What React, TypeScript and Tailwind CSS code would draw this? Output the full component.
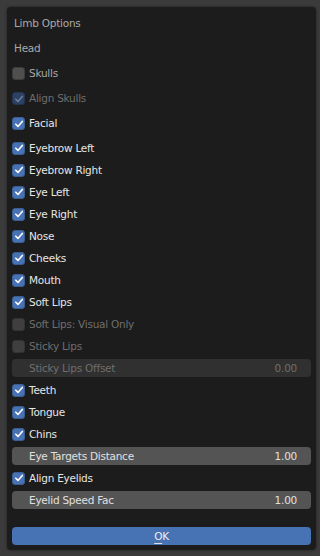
import React from "react";

type Row =
  | { kind: "label"; text: string; dim?: boolean }
  | { kind: "check"; text: string; checked: boolean; disabled?: boolean; soft?: boolean }
  | { kind: "slider"; text: string; value: string; disabled?: boolean };

const topRows: Row[] = [
  { kind: "label", text: "Limb Options" },
  { kind: "label", text: "Head" },
  { kind: "check", text: "Skulls", checked: false, soft: true },
  { kind: "check", text: "Align Skulls", checked: true, disabled: true },
  { kind: "check", text: "Facial", checked: true },
];

const rows: Row[] = [
  { kind: "check", text: "Eyebrow Left", checked: true },
  { kind: "check", text: "Eyebrow Right", checked: true },
  { kind: "check", text: "Eye Left", checked: true },
  { kind: "check", text: "Eye Right", checked: true },
  { kind: "check", text: "Nose", checked: true },
  { kind: "check", text: "Cheeks", checked: true },
  { kind: "check", text: "Mouth", checked: true },
  { kind: "check", text: "Soft Lips", checked: true },
  { kind: "check", text: "Soft Lips: Visual Only", checked: false, disabled: true },
  { kind: "check", text: "Sticky Lips", checked: false, disabled: true },
  { kind: "slider", text: "Sticky Lips Offset", value: "0.00", disabled: true },
  { kind: "check", text: "Teeth", checked: true },
  { kind: "check", text: "Tongue", checked: true },
  { kind: "check", text: "Chins", checked: true },
  { kind: "slider", text: "Eye Targets Distance", value: "1.00" },
  { kind: "check", text: "Align Eyelids", checked: true },
  { kind: "slider", text: "Eyelid Speed Fac", value: "1.00" },
];

const Check = ({ checked, disabled }: { checked: boolean; disabled?: boolean }) => {
  const bg = checked
    ? disabled
      ? "bg-[#2c4163] border-[#243450]"
      : "bg-[#4772b3] border-[#3a5e94]"
    : disabled
      ? "bg-[#3f3f3f] border-[#333333]"
      : "bg-[#4f4f4f] border-[#3c3c3c]";
  return (
    <span className={`flex h-[13px] w-[13px] shrink-0 items-center justify-center rounded-[3px] border ${bg}`}>
      {checked && (
        <svg width="10" height="10" viewBox="0 0 10 10" fill="none">
          <path
            d="M1.8 5.2 L4 7.4 L8.3 2.4"
            stroke={disabled ? "#6b7e9c" : "#ffffff"}
            strokeWidth="1.6"
            strokeLinecap="round"
            strokeLinejoin="round"
          />
        </svg>
      )}
    </span>
  );
};

const RowView = ({ row, h }: { row: Row; h: string }) => {
  if (row.kind === "label") {
    return (
      <div className={`flex ${h} items-center pl-[2px] text-[#a9a9a9]`}>{row.text}</div>
    );
  }
  if (row.kind === "check") {
    const color = row.disabled ? "text-[#6e6e6e]" : row.soft ? "text-[#a9a9a9]" : "text-[#e6e6e6]";
    return (
      <div className={`flex ${h} items-center gap-[4px]`}>
        <Check checked={row.checked} disabled={row.disabled} />
        <span className={color}>{row.text}</span>
      </div>
    );
  }
  return (
    <div className={`flex ${h} items-center`}>
      <div
        className={`flex h-[18px] w-full items-center justify-between rounded-[4px] pl-[17px] pr-[14px] ${
          row.disabled ? "bg-[#303030] text-[#6e6e6e]" : "bg-[#545454] text-[#e0e0e0]"
        }`}
      >
        <span>{row.text}</span>
        <span>{row.value}</span>
      </div>
    </div>
  );
};

export default function App() {
  return (
    <div
      className="h-[556px] w-[320px] bg-[#3b3b3b] pl-[7px] pt-[7px] text-[10.5px] leading-none tracking-[-0.25px]"
      style={{ fontFamily: '"DejaVu Sans", sans-serif' }}
    >
      <div className="flex h-[543px] w-[309px] flex-col rounded-[4px] bg-[#1c1c1c] px-[5px] pt-[4px] shadow-[0_0_3px_rgba(0,0,0,0.5)]">
        {topRows.map((r) => (
          <RowView key={r.text} row={r} h="h-[25px]" />
        ))}
        <div className="h-[1px]" />
        {rows.map((r) => (
          <RowView key={r.text} row={r} h="h-[22px]" />
        ))}
        <button className="mt-[16px] flex h-[18px] w-full items-center justify-center rounded-[4px] bg-[#4772b3] text-[#f0f0f0]">
          <span>
            <span className="underline decoration-[#e0e0e0] underline-offset-[3px]">O</span>K
          </span>
        </button>
      </div>
    </div>
  );
}
